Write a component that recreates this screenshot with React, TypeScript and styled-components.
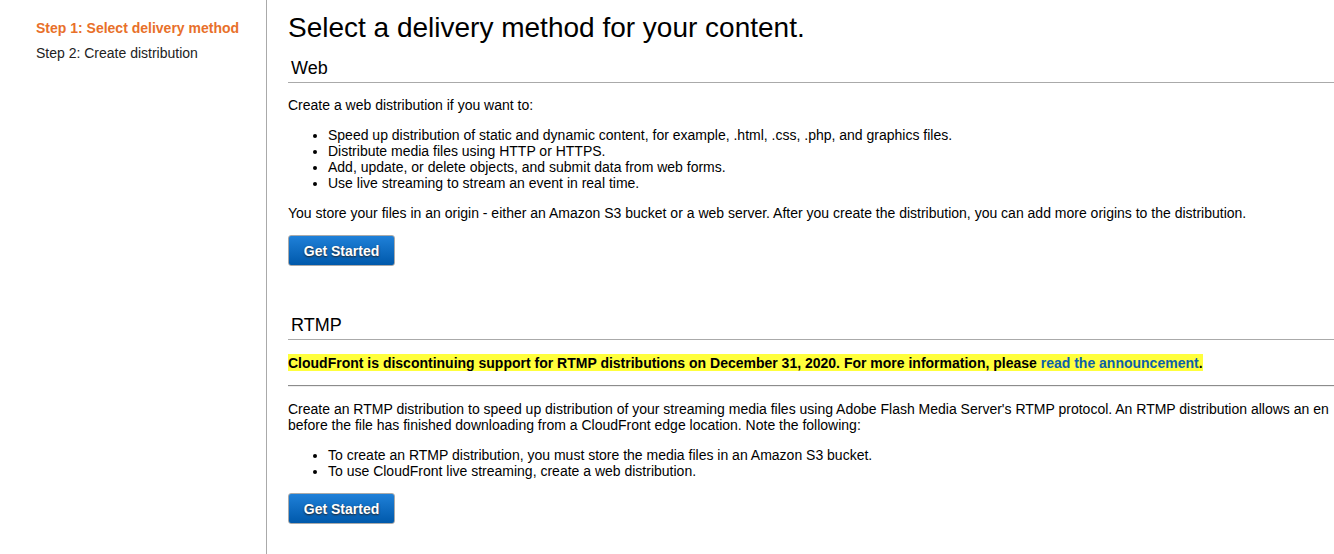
import React from "react";
import styled, { createGlobalStyle } from "styled-components";

const GlobalStyle = createGlobalStyle`
  body {
    margin: 0;
    background: #fff;
    color: #000;
    font: 14px/16px "Liberation Sans", Helvetica, Arial, sans-serif;
  }
`;

const Page = styled.div`
  display: flex;
  min-height: 100vh;
`;

const Sidebar = styled.nav`
  flex: 0 0 230px;
  padding: 20px 0 0 36px;
  border-right: 1px solid #aaa;
`;

const Steps = styled.ol`
  display: flex;
  flex-direction: column;
  gap: 9px;
  margin: 0;
  padding: 0;
  list-style: none;
`;

const Step = styled.li<{ $active?: boolean }>`
  color: ${(p) => (p.$active ? "#e8702a" : "#222")};
  font-weight: ${(p) => (p.$active ? "bold" : "normal")};
  white-space: nowrap;
`;

const Main = styled.main`
  flex: 1;
  min-width: 0;
  padding: 11px 0 30px 21px;
  overflow: hidden;
`;

const Title = styled.h1`
  margin: 0 0 13px;
  font-size: 28px;
  line-height: 34px;
  font-weight: normal;
`;

const Section = styled.section`
  display: flex;
  flex-direction: column;
  gap: 14px;
  & + & {
    margin-top: 49px;
  }
`;

const SectionTitle = styled.h2`
  margin: 0;
  padding: 0 3px 4px;
  border-bottom: 1px solid #aaa;
  font-size: 18px;
  line-height: 20px;
  font-weight: normal;
`;

const Text = styled.p`
  margin: 0;
  white-space: nowrap;
`;

const List = styled.ul`
  margin: 0;
  padding-left: 40px;
`;

const Notice = styled.strong`
  align-self: flex-start;
  padding-top: 1px;
  background: #ffff3c;
`;

const Link = styled.a`
  color: #0d5fa8;
  text-decoration: none;
`;

const Rule = styled.hr`
  width: 100%;
  box-sizing: border-box;
  margin: 0;
  border: 0;
  border-top: 1px solid #8c8c8c;
  border-bottom: 1px solid #eee;
`;

const Button = styled.button`
  align-self: flex-start;
  width: 107px;
  height: 31px;
  padding: 0;
  border: 1px solid #aaa;
  border-radius: 3px;
  background: linear-gradient(#1f80d8, #0059ab);
  color: #fff;
  font: bold 14px/16px "Liberation Sans", Helvetica, Arial, sans-serif;
  text-shadow: 0 1px 2px #222;
  cursor: pointer;
`;

export default function App() {
  return (
    <Page>
      <GlobalStyle />
      <Sidebar aria-label="Steps">
        <Steps>
          <Step $active aria-current="step">Step 1: Select delivery method</Step>
          <Step>Step 2: Create distribution</Step>
        </Steps>
      </Sidebar>
      <Main>
        <Title>Select a delivery method for your content.</Title>
        <Section>
          <SectionTitle>Web</SectionTitle>
          <Text>Create a web distribution if you want to:</Text>
          <List>
            <li>Speed up distribution of static and dynamic content, for example, .html, .css, .php, and graphics files.</li>
            <li>Distribute media files using HTTP or HTTPS.</li>
            <li>Add, update, or delete objects, and submit data from web forms.</li>
            <li>Use live streaming to stream an event in real time.</li>
          </List>
          <Text>
            You store your files in an origin - either an Amazon S3 bucket or a web server. After you create the
            distribution, you can add more origins to the distribution.
          </Text>
          <Button type="button">Get Started</Button>
        </Section>
        <Section>
          <SectionTitle>RTMP</SectionTitle>
          <Notice>
            CloudFront is discontinuing support for RTMP distributions on December 31, 2020. For more information,
            please <Link href="#announcement">read the announcement</Link>.
          </Notice>
          <Rule />
          <Text>
            Create an RTMP distribution to speed up distribution of your streaming media files using Adobe Flash Media
            Server's RTMP protocol. An RTMP distribution allows an en
            <br />
            before the file has finished downloading from a CloudFront edge location. Note the following:
          </Text>
          <List>
            <li>To create an RTMP distribution, you must store the media files in an Amazon S3 bucket.</li>
            <li>To use CloudFront live streaming, create a web distribution.</li>
          </List>
          <Button type="button">Get Started</Button>
        </Section>
      </Main>
    </Page>
  );
}
